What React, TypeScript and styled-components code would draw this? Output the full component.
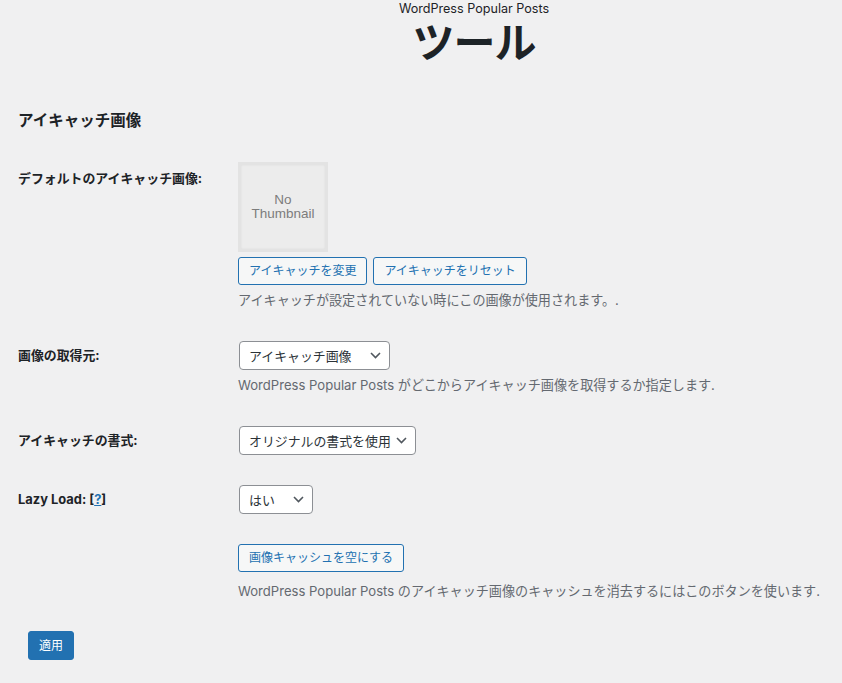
import styled, { createGlobalStyle } from 'styled-components';

const FONT = 'Inter, "Noto Sans CJK JP", sans-serif';
const THUMB_FONT = '"Liberation Sans", Arial, sans-serif';

const GlobalStyle = createGlobalStyle`
    html, body {
        margin: 0;
        padding: 0;
        background: #f0f0f1;
    }
    body {
        font-family: ${FONT};
        color: #1d2327;
        width: 842px;
        height: 683px;
        overflow: hidden;
    }
`;

const Page = styled.div`
    padding: 0 18px;
`;

const Header = styled.header`
    display: flex;
    flex-direction: column;
    align-items: center;
    padding-left: 106px;
`;

const Subtitle = styled.div`
    font-size: 12.6px;
    line-height: 16px;
    margin-top: 1px;
    color: #1d2327;
`;

const Title = styled.h1`
    margin: 0;
    font-size: 42px;
    font-weight: 700;
    line-height: 52px;
    letter-spacing: -1px;
`;

const SectionTitle = styled.h2`
    margin: 42px 0 0;
    font-size: 15.5px;
    font-weight: 700;
    line-height: 20px;
`;

const FormTable = styled.div`
    display: grid;
    grid-template-columns: 220px 1fr;
    margin-top: 16px;
`;

const Label = styled.div<{ top: number }>`
    padding-top: ${({ top }) => top}px;
    font-size: 12.9px;
    font-weight: 700;
    line-height: 17px;
`;

const Cell = styled.div<{ top: number; bottom: number }>`
    padding: ${({ top }) => top}px 0 ${({ bottom }) => bottom}px;
    display: flex;
    flex-direction: column;
    align-items: flex-start;
`;

const Thumb = styled.div`
    width: 84px;
    height: 84px;
    border: 3px solid #e3e3e3;
    background: #ececec;
    box-shadow: inset 0 0 2px rgba(0, 0, 0, 0.08);
    display: flex;
    flex-direction: column;
    align-items: center;
    justify-content: center;
    text-align: center;
    font-family: ${THUMB_FONT};
    font-size: 13.5px;
    line-height: 15px;
    color: #7c7c7c;
`;

const ThumbLine = styled.span`
    display: block;
    margin-top: -1px;
`;

const ButtonRow = styled.div`
    display: flex;
    gap: 6px;
    margin-top: 5px;
`;

const Button = styled.button`
    height: 28px;
    padding: 0 10px;
    border: 1px solid #2271b1;
    border-radius: 3px;
    background: #f6f7f7;
    color: #2271b1;
    font-family: ${FONT};
    font-size: 12px;
    line-height: 26px;
    cursor: pointer;
`;

const PrimaryButton = styled(Button)`
    height: 29px;
    background: #2271b1;
    color: #fff;
`;

const Description = styled.p<{ gap?: number }>`
    margin: ${({ gap = 5 }) => gap}px 0 0;
    font-size: 13.1px;
    line-height: 20px;
    color: #646970;
`;

const SelectBox = styled.div<{ width: number }>`
    width: ${({ width }) => width}px;
    height: 29px;
    box-sizing: border-box;
    margin-left: 1px;
    border: 1px solid #8c8f94;
    border-radius: 4px;
    background: #fff;
    display: flex;
    align-items: center;
    justify-content: space-between;
    padding: 0 8px 0 9px;
    font-size: 12.9px;
    color: #2c3338;
    white-space: nowrap;
`;

const Chevron = () => (
    <svg width="11" height="7" viewBox="0 0 11 7" fill="none">
        <path d="M1 1l4.5 4.5L10 1" stroke="#50575e" strokeWidth="1.6" />
    </svg>
);

const Help = styled.span`
    font-weight: 700;
    a {
        color: #2271b1;
        text-decoration: underline;
        text-underline-offset: 1px;
    }
`;

const Footer = styled.div`
    padding: 15px 10px;
`;

const Select = ({ value, width }: { value: string; width: number }) => (
    <SelectBox width={width}>
        <span>{value}</span>
        <Chevron />
    </SelectBox>
);

const App = () => (
    <Page>
        <GlobalStyle />
        <Header>
            <Subtitle>WordPress Popular Posts</Subtitle>
            <Title>ツール</Title>
        </Header>
        <SectionTitle>アイキャッチ画像</SectionTitle>
        <FormTable>
            <Label top={23}>デフォルトのアイキャッチ画像:</Label>
            <Cell top={15} bottom={16}>
                <Thumb>
                    <ThumbLine>No</ThumbLine>
                    <ThumbLine>Thumbnail</ThumbLine>
                </Thumb>
                <ButtonRow>
                    <Button>アイキャッチを変更</Button>
                    <Button>アイキャッチをリセット</Button>
                </ButtonRow>
                <Description>アイキャッチが設定されていない時にこの画像が使用されます。.</Description>
            </Cell>

            <Label top={21}>画像の取得元:</Label>
            <Cell top={15} bottom={16}>
                <Select value="アイキャッチ画像" width={151} />
                <Description>WordPress Popular Posts がどこからアイキャッチ画像を取得するか指定します.</Description>
            </Cell>

            <Label top={21}>アイキャッチの書式:</Label>
            <Cell top={15} bottom={15}>
                <Select value="オリジナルの書式を使用" width={177} />
            </Cell>

            <Label top={21}>
                Lazy Load:{' '}
                <Help>
                    [<a>?</a>]
                </Help>
            </Label>
            <Cell top={15} bottom={15}>
                <Select value="はい" width={74} />
            </Cell>

            <div />
            <Cell top={15} bottom={15}>
                <Button>画像キャッシュを空にする</Button>
                <Description gap={9}>
                    WordPress Popular Posts のアイキャッチ画像のキャッシュを消去するにはこのボタンを使います.
                </Description>
            </Cell>
        </FormTable>
        <Footer>
            <PrimaryButton>適用</PrimaryButton>
        </Footer>
    </Page>
);

export default App;
